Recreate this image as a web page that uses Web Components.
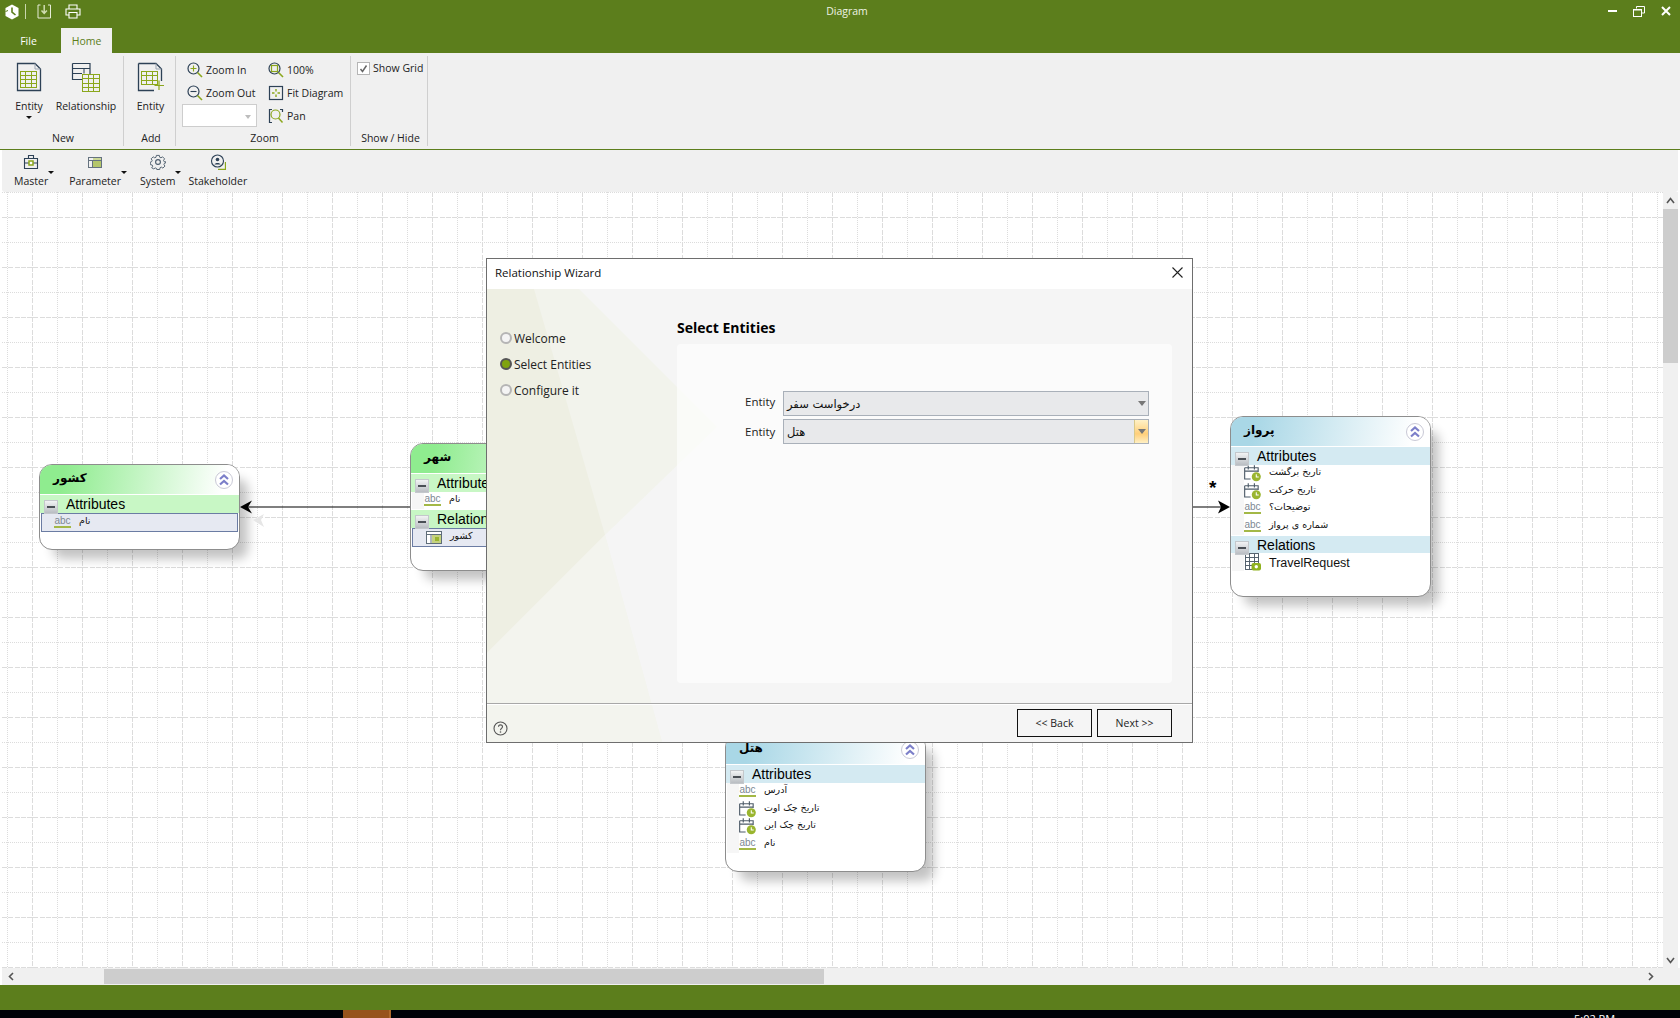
<!DOCTYPE html>
<html lang="en">
<head>
<meta charset="utf-8">
<title>Diagram</title>
<style>
    html, body { margin: 0; height: 100%; overflow: hidden; background: #fff; }
</style>
</head>
<body>
<app-window>
    <title-bar slot="top" caption="Diagram"></title-bar>
    <ribbon-bar slot="top">
        <ribbon-group label="New" size="124">
            <ribbon-button label="Entity" icon="entity" caret size="58"></ribbon-button>
            <ribbon-button label="Relationship" icon="relationship" size="60" style="margin-left:-2px"></ribbon-button>
        </ribbon-group>
        <ribbon-group label="Add" size="52">
            <ribbon-button label="Entity" icon="entityAdd" size="53"></ribbon-button>
        </ribbon-group>
        <ribbon-group label="Zoom" size="175">
            <ribbon-stack size="81">
                <small-button label="Zoom In" icon="zoomIn"></small-button>
                <small-button label="Zoom Out" icon="zoomOut"></small-button>
                <ribbon-combo></ribbon-combo>
            </ribbon-stack>
            <ribbon-stack size="84">
                <small-button label="100%" icon="zoomFull"></small-button>
                <small-button label="Fit Diagram" icon="fit"></small-button>
                <small-button label="Pan" icon="pan"></small-button>
            </ribbon-stack>
        </ribbon-group>
        <ribbon-group label="Show / Hide" size="77">
            <ribbon-check label="Show Grid"></ribbon-check>
        </ribbon-group>
    </ribbon-bar>
    <quick-toolbar slot="top">
        <tool-item label="Master" icon="master" caret style="margin-right:21px"></tool-item>
        <tool-item label="Parameter" icon="parameter" caret style="margin-right:19px"></tool-item>
        <tool-item label="System" icon="system" caret style="margin-right:13px"></tool-item>
        <tool-item label="Stakeholder" icon="stakeholder"></tool-item>
    </quick-toolbar>

    <diagram-canvas slot="canvas">
        <entity-node x="39" y="272" w="201" h="86" tone="green" caption="کشور">
            <entity-section label="Attributes" tone="green">
                <entity-row icon="abc" selected>نام</entity-row>
            </entity-section>
        </entity-node>
        <entity-node x="410" y="251" w="201" h="128" tone="green" caption="شهر">
            <entity-section label="Attributes" tone="green">
                <entity-row icon="abc">نام</entity-row>
            </entity-section>
            <entity-section label="Relations" tone="green">
                <entity-row icon="table" selected>کشور</entity-row>
            </entity-section>
        </entity-node>
        <entity-node x="1230" y="224" w="201" h="181" tone="blue" caption="پرواز">
            <entity-section label="Attributes" tone="blue">
                <entity-row icon="calendar">تاریخ برگشت</entity-row>
                <entity-row icon="calendar">تاریخ حرکت</entity-row>
                <entity-row icon="abc">توضیحات؟</entity-row>
                <entity-row icon="abc">شماره ی پرواز</entity-row>
            </entity-section>
            <entity-section label="Relations" tone="blue">
                <entity-row icon="relation" latin>TravelRequest</entity-row>
            </entity-section>
        </entity-node>
        <entity-node x="725" y="542" w="201" h="138" tone="blue" caption="هتل">
            <entity-section label="Attributes" tone="blue">
                <entity-row icon="abc">آدرس</entity-row>
                <entity-row icon="calendar">تاریخ چک اوت</entity-row>
                <entity-row icon="calendar">تاریخ چک این</entity-row>
                <entity-row icon="abc">نام</entity-row>
            </entity-section>
        </entity-node>
    </diagram-canvas>
    <scroll-bar slot="vscroll" orient="v"></scroll-bar>
    <scroll-bar slot="hscroll" orient="h"></scroll-bar>
    <task-strip slot="bottom"></task-strip>

    <wizard-dialog slot="overlay" caption="Relationship Wizard" heading="Select Entities">
        <wizard-step slot="steps" label="Welcome"></wizard-step>
        <wizard-step slot="steps" label="Select Entities" active></wizard-step>
        <wizard-step slot="steps" label="Configure it"></wizard-step>
        <combo-field label="Entity" value="درخواست سفر"></combo-field>
        <combo-field label="Entity" value="هتل" hot></combo-field>
    </wizard-dialog>
</app-window>

<script>
// --- 1. CONFIG & ICONS ---

const UI_FONT = `"Open Sans", "Noto Sans", "Liberation Sans", sans-serif`;
const ARABIC_FONT = `"DejaVu Sans", "Liberation Sans", sans-serif`;
const GREEN = '#5c7e1c';
const NAVY = '#2d4156';
const LEAF = '#8ba71c';

const svg = (w, h, body) =>
    `<svg width="${w}" height="${h}" viewBox="0 0 ${w} ${h}" fill="none" style="display:block">${body}</svg>`;

const gridLines = (x, y, w, h, cols, rows, color) => {
    let d = `M${x} ${y}h${w}v${h}h${-w}z`;
    for (let i = 1; i < cols; i++) d += `M${x + i * w / cols} ${y}v${h}`;
    for (let i = 1; i < rows; i++) d += `M${x} ${y + i * h / rows}h${w}`;
    return `<path d="${d}" stroke="${color}" shape-rendering="crispEdges"/>`;
};

const magnifier = (inner, ring = NAVY, handle = LEAF) => svg(16, 16, `
    <circle cx="6.5" cy="6.5" r="5.5" stroke="${ring}" stroke-width="1.2"/>
    <path d="M10.5 10.5l4.5 4.5" stroke="${handle}" stroke-width="1.6"/>${inner}`);

const ICONS = {
    entity: svg(26, 30, `
        <path d="M1.5 1.5H19L24.5 7V28.5H1.5Z" stroke="${NAVY}" stroke-width="1.3"/>
        <path d="M19 1.5V7H24.5" stroke="#9aa5b1"/>
        ${gridLines(4.5, 9.5, 16, 16, 3, 4, LEAF)}`),
    relationship: svg(30, 30, `
        <path d="M1.5 1.5H19V12M1.5 1.5V17.5H11" stroke="${NAVY}" stroke-width="1.2"/>
        <path d="M1.5 6.5H19M1.5 11.5H11M13 6.5V11.5" stroke="${NAVY}"/>
        ${gridLines(11.5, 12.5, 17, 17, 3, 4, LEAF)}`),
    entityAdd: svg(28, 30, `
        <path d="M1.5 1.5H19L24.5 7V19M17 28.5H1.5V1.5" stroke="${NAVY}" stroke-width="1.3"/>
        <path d="M19 1.5V7H24.5" stroke="#9aa5b1"/>
        ${gridLines(4.5, 9.5, 16, 13, 3, 3, LEAF)}
        <path d="M22 18.5v9.5M17.5 23.5h9.5" stroke="${LEAF}" stroke-width="1.2"/>`),
    zoomIn: magnifier(`<path d="M3.5 6.5h6M6.5 3.5v6" stroke="${LEAF}" stroke-width="1.1"/>`),
    zoomOut: magnifier(`<path d="M3.5 6.5h6" stroke="${NAVY}" stroke-width="1.1"/>`),
    zoomFull: magnifier(`<rect x="3.5" y="3.5" width="6" height="6" stroke="${LEAF}" stroke-width="1.2"/>`),
    fit: svg(16, 16, `
        <rect x="1.5" y="1.5" width="13" height="13" stroke="${NAVY}" stroke-width="1.2"/>
        <path d="M8 4v2.5M8 9.5V12M4 8h2.5M9.5 8H12" stroke="${LEAF}" stroke-width="1.4"/>`),
    pan: svg(16, 16, `
        <path d="M4 1.5H1.5V14.5H4M12 1.5H14.5V4" stroke="${NAVY}" stroke-width="1.2"/>
        <circle cx="7.5" cy="6.5" r="4.5" stroke="${LEAF}" stroke-width="1.2"/>
        <path d="M10.5 10l4 4.5" stroke="${LEAF}" stroke-width="1.5"/>`),
    master: svg(16, 16, `
        <path d="M1.5 4.5H14.5V14.5H1.5ZM5.5 4.5V1.5H10.5V4.5M1.5 9H14.5" stroke="${NAVY}" stroke-width="1.1"/>
        <rect x="6" y="7" width="4" height="4" fill="#fff" stroke="${LEAF}" stroke-width="1.5"/>`),
    parameter: svg(16, 16, `
        <rect x="1.5" y="3.5" width="13" height="10" stroke="#65727f"/>
        <path d="M1.5 6.5H14.5M5.5 6.5V13.5" stroke="#65727f"/>
        <rect x="6" y="7" width="8" height="6" fill="#b4c66a"/>
        <rect x="6" y="4" width="8" height="2" fill="#cbd896"/>`),
    system: svg(16, 16, `
        <path d="M6.4 1h3.2l.4 2 1.4.6 1.7-1.1 2.2 2.2-1.1 1.7.6 1.4 2 .4M15 8.2v0M6.4 1l-.4 2-1.4.6-1.7-1.1-2.2 2.2 1.1 1.7-.6 1.4-1.4.4v2.8l2 .4.6 1.4-1.1 1.7 2.2 1.1 1.7-1 1.4.6.2 1.1h3.2l.4-2 1.4-.6 1.7 1.1 2.2-2.2-1.1-1.7.6-1.4 1.4-.4V7.8" stroke="#4a5a6a" transform="translate(.5 .5) scale(.92)"/>
        <circle cx="8" cy="8" r="2.4" stroke="#4a5a6a" stroke-width="1.1"/>`),
    stakeholder: svg(16, 16, `
        <circle cx="7.5" cy="7" r="6" stroke="${NAVY}" stroke-width="1.1"/>
        <circle cx="7.5" cy="5.5" r="1.8" fill="${NAVY}"/>
        <path d="M4.5 10.5c.4-2 5.6-2 6 0z" fill="${NAVY}"/>
        <path d="M15.5 8V15.5H8" stroke="${LEAF}" stroke-width="1.3"/>`),
    logo: svg(16, 16, `
        <path d="M8 .5L14.5 4V12L8 15.5 1.5 12V4Z" fill="#fff"/>
        <path d="M8 3.5V8.2L11.5 11" stroke="${GREEN}" stroke-width="1.6"/>
        <path d="M1.5 7.5L4 6.5" stroke="${GREEN}"/>`),
    save: svg(15, 15, `
        <path d="M3.5 1H1V14H13.5V1H11" stroke="#e6ecd8" stroke-width="1"/>
        <path d="M7.2 1V9M4.5 6.5l2.7 3 2.7-3" stroke="#cfdcb0" stroke-width="1.5"/>`),
    print: svg(16, 15, `
        <path d="M4 5V1H12V5M4 11H1V5H15V11H12" stroke="#fff" stroke-width="1.1"/>
        <path d="M4 8.5H12V14H4Z" stroke="#fff" stroke-width="1.1"/>`),
    minimize: svg(10, 3, `<rect y="0" width="9" height="2" fill="#fff"/>`),
    restore: svg(12, 11, `
        <path d="M3.5 2.5V.5H11.5V7H8.5" stroke="#fff"/>
        <rect x=".5" y="3.5" width="8" height="7" stroke="#fff"/>
        <rect x=".5" y="3.5" width="8" height="1" fill="#fff"/>`),
    close: svg(10, 10, `<path d="M1 1l8 8M9 1l-8 8" stroke="#fff" stroke-width="2"/>`),
    calendar: svg(18, 18, `
        <path d="M.7 3.5H15V8M7 15.3H.7V3.5M.7 7H15M4.5 .8v4.4M11 .8v4.4" stroke="#4d5b68" stroke-width="1.2"/>
        <circle cx="13" cy="13" r="4.8" fill="#9ab52f"/>
        <path d="M13 10.2v3h2.6" stroke="#fff" stroke-width="1.1"/>`),
    table: svg(16, 13, `
        <rect x=".5" y=".5" width="15" height="12" stroke="#5f6d79" fill="#fff"/>
        <path d="M.5 3.5H15.5M5 3.5V12.5" stroke="#5f6d79"/>
        <rect x="6" y="4" width="9" height="8" fill="#c5d27f"/>
        <rect x="9" y="6" width="4" height="4" fill="#9ab52f"/>`),
    relation: svg(18, 18, `
        ${gridLines(1.5, .5, 14, 16, 3, 4, '#4d5b68')}
        <rect x="8" y="10" width="10" height="8" rx="2" fill="#8fb11f"/>
        <circle cx="13" cy="14" r="1.8" fill="#fff"/>`),
    help: svg(15, 15, `
        <circle cx="7.5" cy="7.5" r="6.5" stroke="#555" stroke-width="1.1"/>
        <path d="M5.5 5.8c0-2.6 4-2.6 4 0 0 1.6-2 1.6-2 3.4" stroke="#555" stroke-width="1.1"/>
        <circle cx="7.5" cy="11" r=".8" fill="#555"/>`)
};


// --- 2. WINDOW FRAME ---

class AppWindow extends HTMLElement {
    constructor() {
        super();
        this.attachShadow({ mode: 'open' }).innerHTML = `
            <style>
                :host { display: flex; flex-direction: column; position: relative; width: 1680px; height: 1018px;
                        overflow: hidden; font-family: ${UI_FONT}; color: #222; }
                .work { flex: 1; min-height: 0; display: flex; background: #fff; }
                .work ::slotted(diagram-canvas) { flex: 1; min-width: 0; }
                .overlay ::slotted(*) { position: absolute; left: 486px; top: 258px; }
            </style>
            <slot name="top"></slot>
            <div class="work"><slot name="canvas"></slot><slot name="vscroll"></slot></div>
            <slot name="hscroll"></slot>
            <slot name="bottom"></slot>
            <div class="overlay"><slot name="overlay"></slot></div>`;
    }
}
customElements.define('app-window', AppWindow);

class TitleBar extends HTMLElement {
    constructor() {
        super();
        this.attachShadow({ mode: 'open' }).innerHTML = `
            <style>
                :host { display: block; background: ${GREEN}; color: #fff; height: 53px; font-size: 10.5px; }
                .row { display: grid; grid-template-columns: 1fr auto 1fr; height: 28px; align-items: center; padding-left: 14px; }
                .left { display: flex; align-items: center; margin-left: -10px; margin-top: -5px; }
                .sep { width: 1px; height: 15px; background: #c9d6ad; margin: 0 11px 0 5px; }
                .left .gap { width: 13px; }
                .caption { margin-top: -7px; color: #eef2e4; }
                .controls { display: flex; justify-content: flex-end; align-items: center; margin-top: -6px; }
                .tabs { display: flex; height: 25px; align-items: stretch; }
                .tab { display: flex; align-items: center; justify-content: center; }
                .file { width: 61px; padding-right: 4px; box-sizing: border-box; }
                .home { width: 51px; background: #f0f0f0; color: ${GREEN}; }
            </style>
            <div class="row">
                <div class="left">${ICONS.logo}<span class="sep"></span>${ICONS.save}<span class="gap"></span>${ICONS.print}</div>
                <div class="caption">${this.getAttribute('caption')}</div>
                <div class="controls">
                    <span style="margin-right:15px">${ICONS.minimize}</span>
                    <span style="margin-right:16px">${ICONS.restore}</span>
                    <span style="margin-right:9px">${ICONS.close}</span>
                </div>
            </div>
            <div class="tabs"><div class="tab file">File</div><div class="tab home">Home</div></div>`;
    }
}
customElements.define('title-bar', TitleBar);


// --- 3. RIBBON ---

class RibbonBar extends HTMLElement {
    constructor() {
        super();
        this.attachShadow({ mode: 'open' }).innerHTML = `
            <style>
                :host { display: flex; height: 97px; box-sizing: border-box; background: #f0f0f0;
                        border-bottom: 1px solid ${GREEN}; padding: 3px 0 3px; font-size: 10.5px; }
            </style>
            <slot></slot>`;
    }
}
customElements.define('ribbon-bar', RibbonBar);

class RibbonGroup extends HTMLElement {
    constructor() {
        super();
        this.attachShadow({ mode: 'open' }).innerHTML = `
            <style>
                :host { display: flex; flex-direction: column; box-sizing: border-box; width: ${this.getAttribute('size')}px;
                        border-right: 1px solid #cfcfcf; }
                .body { flex: 1; display: flex; min-height: 0; }
                .label { height: 16px; line-height: 16px; text-align: center; margin-top: -2px; padding-left: 3px; }
            </style>
            <div class="body"><slot></slot></div>
            <div class="label">${this.getAttribute('label')}</div>`;
    }
}
customElements.define('ribbon-group', RibbonGroup);

class RibbonButton extends HTMLElement {
    constructor() {
        super();
        const caret = this.hasAttribute('caret') ? '<span class="caret"></span>' : '';
        this.attachShadow({ mode: 'open' }).innerHTML = `
            <style>
                :host { display: flex; flex-direction: column; align-items: center; box-sizing: border-box; flex: none;
                        width: ${this.getAttribute('size')}px; padding-top: 6px; }
                .icon { height: 30px; }
                .label { line-height: 16px; margin-top: 6px; white-space: nowrap; }
                .caret { width: 0; height: 0; border: 3px solid transparent; border-top: 3px solid #111; border-bottom: 0; margin-top: 2px; }
            </style>
            <div class="icon">${ICONS[this.getAttribute('icon')]}</div>
            <div class="label">${this.getAttribute('label')}</div>${caret}`;
    }
}
customElements.define('ribbon-button', RibbonButton);

class RibbonStack extends HTMLElement {
    constructor() {
        super();
        this.attachShadow({ mode: 'open' }).innerHTML = `
            <style>
                :host { display: flex; flex-direction: column; width: ${this.getAttribute('size')}px; padding-left: 6px; padding-top: 2px; box-sizing: content-box; }
                :host(:last-child) { padding-left: 0; }
            </style>
            <slot></slot>`;
    }
}
customElements.define('ribbon-stack', RibbonStack);

class SmallButton extends HTMLElement {
    constructor() {
        super();
        this.attachShadow({ mode: 'open' }).innerHTML = `
            <style>
                :host { display: flex; align-items: center; gap: 3px; height: 23px; margin-left: 5px; white-space: nowrap; }
            </style>
            ${ICONS[this.getAttribute('icon')]}<span>${this.getAttribute('label')}</span>`;
    }
}
customElements.define('small-button', SmallButton);

class RibbonCombo extends HTMLElement {
    constructor() {
        super();
        this.attachShadow({ mode: 'open' }).innerHTML = `
            <style>
                :host { display: block; position: relative; box-sizing: border-box; width: 75px; height: 23px; margin-top: 0;
                        background: #fff; border: 1px solid #cdcdcd; }
                .arrow { position: absolute; right: 5px; top: 10px; width: 0; height: 0;
                         border: 3px solid transparent; border-top: 4px solid #bdbdbd; border-bottom: 0; }
            </style>
            <span class="arrow"></span>`;
    }
}
customElements.define('ribbon-combo', RibbonCombo);

class RibbonCheck extends HTMLElement {
    constructor() {
        super();
        this.attachShadow({ mode: 'open' }).innerHTML = `
            <style>
                :host { display: flex; align-items: center; gap: 3px; height: 18px; margin: 3px 0 0 6px; white-space: nowrap; }
                .box { display: block; box-sizing: border-box; width: 13px; height: 13px; border: 1px solid #b5b5b5; background: #fff; }
            </style>
            <span class="box">${svg(11, 11, `<path d="M2.5 6l2 2.5 4-6" stroke="#666" stroke-width="1.5"/>`)}</span>
            <span>${this.getAttribute('label')}</span>`;
    }
}
customElements.define('ribbon-check', RibbonCheck);

class QuickToolbar extends HTMLElement {
    constructor() {
        super();
        this.attachShadow({ mode: 'open' }).innerHTML = `
            <style>
                :host { display: flex; height: 42px; box-sizing: border-box; background: #f0f0f0; padding: 4px 0 0 12px;
                        margin: 0 2px; font-size: 10.5px; border-radius: 0 0 3px 3px; }
            </style>
            <slot></slot>`;
    }
}
customElements.define('quick-toolbar', QuickToolbar);

class ToolItem extends HTMLElement {
    constructor() {
        super();
        const caret = this.hasAttribute('caret') ? '<span class="caret"></span>' : '';
        this.attachShadow({ mode: 'open' }).innerHTML = `
            <style>
                :host { display: flex; flex-direction: column; align-items: center; position: relative; white-space: nowrap; }
                .label { line-height: 16px; margin-top: 3px; }
                .caret { position: absolute; left: 100%; top: 17px; margin-left: 0; width: 0; height: 0;
                         border: 3px solid transparent; border-top: 3px solid #111; border-bottom: 0; }
            </style>
            ${ICONS[this.getAttribute('icon')]}<div class="label">${this.getAttribute('label')}</div>${caret}`;
    }
}
customElements.define('tool-item', ToolItem);


// --- 4. DIAGRAM ---

class DiagramCanvas extends HTMLElement {
    constructor() {
        super();
        const vLine = (x, dash) => `<path d="M${x} 0V50" stroke-dasharray="${dash}"/>`;
        const hLine = (y, dash) => `<path d="M0 ${y}H50" stroke-dasharray="${dash}"/>`;
        this.attachShadow({ mode: 'open' }).innerHTML = `
            <style>
                :host { display: block; position: relative; overflow: hidden; background: #fff; }
                svg.grid, svg.edges { position: absolute; left: 0; top: 0; }
                svg.edges { overflow: visible; }
                ::slotted(entity-node) { position: absolute; }
            </style>
            <svg class="grid" width="1663" height="776">
                <defs>
                    <pattern id="cells" width="50" height="50" patternUnits="userSpaceOnUse" patternTransform="translate(2 0)">
                        <g stroke="#dcdcdc" shape-rendering="crispEdges">
                            ${vLine(5.5, '1 1')}${vLine(30.5, '5 1.25')}
                            ${hLine(0.5, '1 1')}${hLine(25.5, '5 1.25')}
                        </g>
                    </pattern>
                </defs>
                <rect x="2" width="1661" height="776" fill="url(#cells)"/>
            </svg>
            <slot></slot>
            <svg class="edges" width="1663" height="776">
                <path d="M410 315H246M1193 315H1224" stroke="#000" stroke-width="1.2"/>
                <path d="M240 315L252 308.5 248 315 252 321.5Z" fill="#000"/>
                <path d="M1230 315L1218 308.5 1221 315 1218 321.5Z" fill="#000"/>
                <path d="M253 328L264 322 261 328 264 335Z" fill="#e6e6e6"/>
                <text x="1209" y="302" font-family="Liberation Sans, sans-serif" font-size="19" font-weight="700" fill="#000">*</text>
            </svg>`;
    }
}
customElements.define('diagram-canvas', DiagramCanvas);

class EntityNode extends HTMLElement {
    constructor() {
        super();
        const a = name => this.getAttribute(name);
        const tint = a('tone') === 'green' ? '#8fec8f' : '#a9d7e6';
        this.style.left = a('x') + 'px';
        this.style.top = a('y') + 'px';
        this.attachShadow({ mode: 'open' }).innerHTML = `
            <style>
                :host { display: block; box-sizing: border-box; width: ${a('w')}px; height: ${a('h')}px; background: #fff;
                        border: 1px solid #8d8d8d; border-radius: 13px; overflow: visible;
                        box-shadow: 11px 12px 11px -3px rgba(0,0,0,.24); }
                .head { position: relative; display: flex; align-items: center; height: 29px; padding-left: 13px;
                        border-radius: 12px 12px 0 0; background: linear-gradient(100deg, ${tint} 0%, ${tint} 12%, #fff 92%);
                        margin-bottom: 1px; }
                .title { font: 700 12px ${ARABIC_FONT}; color: #000; direction: rtl; margin-top: -4px; }
                .fold { position: absolute; right: 6px; top: 6px; box-sizing: border-box; width: 18px; height: 18px;
                        border-radius: 50%; border: 1px solid #c9c9d6; background: #fff; }
                .fold svg { margin: 1px 0 0 2px; }
            </style>
            <div class="head">
                <span class="title">${a('caption')}</span>
                <span class="fold">${svg(12, 14, `<path d="M2 6l4-3.5L10 6M2 11.5l4-3.5 4 3.5" stroke="#7c7fc9" stroke-width="2.2"/>`)}</span>
            </div>
            <slot></slot>`;
    }
}
customElements.define('entity-node', EntityNode);

class EntitySection extends HTMLElement {
    constructor() {
        super();
        const band = this.getAttribute('tone') === 'green' ? '#c8f7c5' : '#d4eaf2';
        this.attachShadow({ mode: 'open' }).innerHTML = `
            <style>
                :host { display: block; margin-bottom: 1px; }
                .band { position: relative; height: 17.5px; background: ${band}; padding-left: 26px;
                        font: 14px/18px "Liberation Sans", Arial, sans-serif; color: #000; }
                .minus { position: absolute; left: 4px; top: 5px; box-sizing: border-box; width: 14px; height: 14px;
                         border: 1px solid #c4c8cc; background: linear-gradient(#f2f3f4, #b9bdc2); z-index: 1; }
                .minus::after { content: ""; position: absolute; left: 2px; right: 2px; top: 5px; height: 2px; background: #4a4f55; }
            </style>
            <div class="band"><span class="minus"></span>${this.getAttribute('label')}</div>
            <slot></slot>`;
    }
}
customElements.define('entity-section', EntitySection);

class EntityRow extends HTMLElement {
    constructor() {
        super();
        const kind = this.getAttribute('icon');
        const icon = kind === 'abc' ? '<span class="abc">abc</span>' : ICONS[kind];
        const latin = this.hasAttribute('latin');
        this.attachShadow({ mode: 'open' }).innerHTML = `
            <style>
                :host { display: flex; align-items: center; box-sizing: border-box; height: 17.5px; margin: 0 1px; padding-left: 12px;
                        background: linear-gradient(90deg, #f6f6f6 12px, transparent 12px); position: relative; }
                :host([selected]) { height: 19px; background: #e6e9f2; border: 1px solid #6b7ca3; padding-left: 12px; margin: 0 1px; }
                .icon { width: 17px; display: flex; justify-content: center; flex: none; margin-right: 8px; }
                .abc { font: 10px/10px "Liberation Sans", sans-serif; color: #7d8893; border-bottom: 2px solid #a3b846; padding-bottom: 0; }
                .text { color: #111; white-space: nowrap;
                        font: ${latin ? '12.5px "Liberation Sans", sans-serif' : `9.5px ${ARABIC_FONT}`};
                        direction: ${latin ? 'ltr' : 'rtl'}; margin-top: ${latin ? 2 : -3}px; }
            </style>
            <span class="icon">${icon}</span><span class="text"><slot></slot></span>`;
    }
}
customElements.define('entity-row', EntityRow);

class ScrollBar extends HTMLElement {
    constructor() {
        super();
        const vertical = this.getAttribute('orient') === 'v';
        const chevron = d => svg(9, 9, `<path d="${d}" stroke="#555" stroke-width="1.6"/>`);
        this.attachShadow({ mode: 'open' }).innerHTML = vertical ? `
            <style>
                :host { display: flex; flex-direction: column; align-items: center; width: 15px; margin-right: 2px; flex: none; background: #f0f0f0; }
                .thumb { width: 15px; height: 154px; background: #cdcdcd; }
                .up { height: 17px; display: flex; align-items: center; justify-content: center; }
                .fill { flex: 1; }
                .down { height: 16px; display: flex; align-items: center; justify-content: center; }
            </style>
            <div class="up">${chevron('M1 7L4.5 2.5 8 7')}</div>
            <div class="thumb"></div><div class="fill"></div>
            <div class="down">${chevron('M1 2L4.5 6.5 8 2')}</div>` : `
            <style>
                :host { display: flex; align-items: center; height: 17px; box-sizing: border-box; padding: 1px 22px 1px 2px; background: #f0f0f0; margin-left: 2px; }
                .arrow { width: 15px; display: flex; justify-content: center; flex: none; }
                .track { flex: 1; height: 15px; display: flex; }
                .thumb { margin-left: 85px; width: 720px; background: #cdcdcd; }
            </style>
            <div class="arrow">${chevron('M6 1L2.5 4.5 6 8')}</div>
            <div class="track"><div class="thumb"></div></div>
            <div class="arrow">${chevron('M3 1L6.5 4.5 3 8')}</div>`;
    }
}
customElements.define('scroll-bar', ScrollBar);

class TaskStrip extends HTMLElement {
    constructor() {
        super();
        this.attachShadow({ mode: 'open' }).innerHTML = `
            <style>
                :host { display: block; }
                .status { height: 25px; background: ${GREEN}; }
                .task { position: relative; display: flex; height: 8px; overflow: hidden; background: #000208; }
                .app { margin-left: 343px; width: 48px; background: #97531c; border-right: 2px solid #b06a2c; box-sizing: border-box; }
                .clock { position: absolute; left: 1574px; top: 2px; color: #fff; font-size: 11px; line-height: 14px; }
            </style>
            <div class="status"></div>
            <div class="task"><div class="app"></div><div class="clock">5:02 PM</div></div>`;
    }
}
customElements.define('task-strip', TaskStrip);


// --- 5. WIZARD ---

class WizardDialog extends HTMLElement {
    constructor() {
        super();
        this.attachShadow({ mode: 'open' }).innerHTML = `
            <style>
                :host { display: flex; flex-direction: column; position: relative; box-sizing: border-box; width: 707px; height: 485px;
                        border: 1px solid #6e6e6e; background: #f5f5f5; font-size: 12px; color: #222; }
                .title { display: flex; align-items: center; justify-content: space-between; height: 30px; flex: none; box-sizing: border-box;
                         background: #fff; padding: 0 8px 4px 8px; position: relative; z-index: 1; }
                .title span { font-size: 11.5px; color: #111; }
                .back { position: absolute; left: 0; top: 30px; }
                .main { flex: 1; display: flex; min-height: 0; position: relative; }
                .steps { width: 190px; flex: none; box-sizing: border-box; padding: 36px 0 0 13px; }
                .content { flex: 1; display: flex; flex-direction: column; padding-right: 20px; min-width: 0; }
                h2 { margin: 29px 0 0; font-size: 14px; line-height: 20px; font-weight: 700; color: #000; }
                .panel { flex: 1; margin: 6px 0 20px; background: rgba(255,255,255,.62); border-radius: 4px;
                         display: flex; flex-direction: column; gap: 3px; padding: 47px 23px 0 0; }
                .foot { display: flex; align-items: flex-start; height: 39px; flex: none; position: relative; box-sizing: border-box;
                        border-top: 1px solid #a8a8a8; box-shadow: inset 0 1px 0 #fff; padding: 5px 20px 0 6px; gap: 5px; }
                .help { margin: 12px auto 0 0; }
                button { all: unset; box-sizing: border-box; width: 75px; height: 28px; border: 1px solid #111; text-align: center;
                         font: 10.5px/25px ${UI_FONT}; color: #222; }
            </style>
            <svg class="back" width="705" height="453" fill="none">
                <path d="M0 0H92L230 138 118 246 175 453H0Z" fill="#f2f3ec"/>
                <path d="M0 0H47L118 246 0 364Z" fill="#eeefe3"/>
                <path d="M0 364L118 246 175 453H0Z" fill="#f3f4ee"/>
            </svg>
            <div class="title"><span>${this.getAttribute('caption')}</span>
                ${svg(13, 13, `<path d="M1.5 1.5l10 10M11.5 1.5l-10 10" stroke="#222" stroke-width="1.1"/>`)}</div>
            <div class="main">
                <div class="steps"><slot name="steps"></slot></div>
                <div class="content">
                    <h2>${this.getAttribute('heading')}</h2>
                    <div class="panel"><slot></slot></div>
                </div>
            </div>
            <div class="foot"><span class="help">${ICONS.help}</span><button>&lt;&lt; Back</button><button>Next &gt;&gt;</button></div>`;
    }
}
customElements.define('wizard-dialog', WizardDialog);

class WizardStep extends HTMLElement {
    constructor() {
        super();
        this.attachShadow({ mode: 'open' }).innerHTML = `
            <style>
                :host { display: flex; align-items: center; gap: 2px; height: 26px; font-size: 12px; white-space: nowrap; }
                .dot { box-sizing: border-box; width: 12px; height: 12px; border-radius: 50%; border: 2px solid #b5b5b5; background: #f4f4f4; }
                :host([active]) .dot { border-color: #555; background: #7fa30f; }
            </style>
            <span class="dot"></span><span>${this.getAttribute('label')}</span>`;
    }
}
customElements.define('wizard-step', WizardStep);

class ComboField extends HTMLElement {
    constructor() {
        super();
        this.attachShadow({ mode: 'open' }).innerHTML = `
            <style>
                :host { display: flex; align-items: center; gap: 8px; height: 25px; font-size: 11.5px; }
                .label { width: 30px; margin-left: auto; margin-top: -5px; white-space: nowrap; }
                :host([hot]) .label { margin-top: -1px; }
                .box { position: relative; box-sizing: border-box; width: 366px; height: 25px; background: #e8e9eb;
                       border: 1px solid #a9b0b9; display: flex; align-items: center; padding-left: 3px; }
                .value { font: 11.5px ${ARABIC_FONT}; direction: rtl; color: #111; }
                .drop { position: absolute; right: 0; top: 0; bottom: 0; width: 13px; display: flex; align-items: center; justify-content: center; }
                :host([hot]) .drop { background: linear-gradient(#fff2c8, #ffcf7a 60%, #fff0c4); border-left: 1px solid #d9c98a; }
                .tri { width: 0; height: 0; border: 4px solid transparent; border-top: 5px solid #777; border-bottom: 0; }
            </style>
            <span class="label">${this.getAttribute('label')}</span>
            <div class="box"><span class="value">${this.getAttribute('value')}</span><span class="drop"><span class="tri"></span></span></div>`;
    }
}
customElements.define('combo-field', ComboField);
</script>
</body>
</html>
